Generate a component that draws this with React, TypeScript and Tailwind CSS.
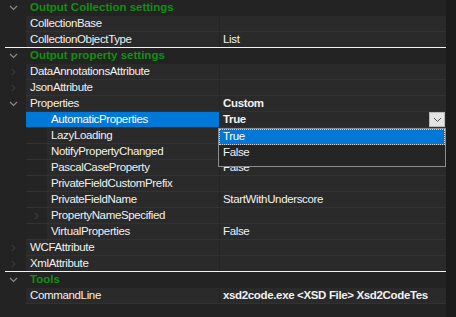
import React from "react";

type Row =
  | { kind: "cat"; label: string }
  | {
      kind: "prop";
      name: string;
      value?: string;
      bold?: boolean;
      nested?: boolean;
      chevron?: "open" | "closed";
      selected?: boolean;
      last?: boolean;
    };

const rows: Row[] = [
  { kind: "cat", label: "Output Collection settings" },
  { kind: "prop", name: "CollectionBase" },
  { kind: "prop", name: "CollectionObjectType", value: "List", last: true },
  { kind: "cat", label: "Output property settings" },
  { kind: "prop", name: "DataAnnotationsAttribute", chevron: "closed" },
  { kind: "prop", name: "JsonAttribute", chevron: "closed" },
  { kind: "prop", name: "Properties", value: "Custom", bold: true, chevron: "open" },
  { kind: "prop", name: "AutomaticProperties", value: "True", bold: true, nested: true, selected: true },
  { kind: "prop", name: "LazyLoading", nested: true },
  { kind: "prop", name: "NotifyPropertyChanged", nested: true },
  { kind: "prop", name: "PascalCaseProperty", value: "False", nested: true },
  { kind: "prop", name: "PrivateFieldCustomPrefix", nested: true },
  { kind: "prop", name: "PrivateFieldName", value: "StartWithUnderscore", nested: true },
  { kind: "prop", name: "PropertyNameSpecified", nested: true, chevron: "closed" },
  { kind: "prop", name: "VirtualProperties", value: "False", nested: true },
  { kind: "prop", name: "WCFAttribute", chevron: "closed" },
  { kind: "prop", name: "XmlAttribute", chevron: "closed", last: true },
  { kind: "cat", label: "Tools" },
  { kind: "prop", name: "CommandLine", value: "xsd2code.exe <XSD File> Xsd2CodeTes", bold: true },
];

function ChevronDown() {
  return (
    <svg width="9" height="6" viewBox="0 0 9 6" className="block">
      <path d="M1 1 L4.5 4.5 L8 1" fill="none" stroke="#8a8a8a" strokeWidth="1.2" />
    </svg>
  );
}

function ChevronRight() {
  return (
    <svg width="5" height="8" viewBox="0 0 5 8" className="block">
      <path d="M1 1 L4 4 L1 7" fill="none" stroke="#3a3a3a" strokeWidth="1.2" />
    </svg>
  );
}

function PropRow({ row }: { row: Extract<Row, { kind: "prop" }> }) {
  const border = row.last ? "border-b border-[#f2f2f2]" : "border-b border-[#323232]";
  return (
    <div className="flex h-4">
      {/* outer gutter */}
      <div className="flex w-[26px] shrink-0 items-center justify-center">
        {!row.nested && row.chevron === "open" && <ChevronDown />}
        {!row.nested && row.chevron === "closed" && <ChevronRight />}
      </div>
      <div className={`flex min-w-0 flex-1 ${border} ${row.last ? "-ml-[21px] pl-[21px]" : ""}`}>
        <div
          className={`flex w-[193px] shrink-0 items-center ${
            row.selected ? "bg-[#0078d7] text-white" : "bg-[#2a2a2b]"
          }`}
        >
          {row.nested && (
            <div
              className={`flex h-full w-[21px] shrink-0 items-center justify-center ${
                row.selected ? "" : "bg-[#242424]"
              }`}
            >
              {row.chevron === "closed" && <ChevronRight />}
            </div>
          )}
          <span className="whitespace-nowrap pl-[4px] leading-none">{row.name}</span>
        </div>
        <div className="w-px shrink-0 bg-[#232323]" />
        <div className="relative flex min-w-0 flex-1 items-center overflow-hidden bg-[#2a2a2b]">
          <span className={`whitespace-nowrap pl-[3px] leading-none ${row.bold ? "font-bold" : ""}`}>
            {row.value}
          </span>
          {row.selected && (
            <div className="absolute right-px top-0 flex h-[15px] w-4 items-center justify-center border border-[#b9b9b9] bg-[#e4e4e4]">
              <svg width="9" height="6" viewBox="0 0 9 6">
                <path d="M1 1 L4.5 4.5 L8 1" fill="none" stroke="#555" strokeWidth="1" />
              </svg>
            </div>
          )}
        </div>
      </div>
    </div>
  );
}

function CatRow({ label }: { label: string }) {
  return (
    <div className="flex h-4 items-center">
      <div className="flex w-[26px] shrink-0 items-center justify-center">
        <ChevronDown />
      </div>
      <span className="pl-[4px] font-bold leading-none tracking-[0px] text-[#119011]">{label}</span>
    </div>
  );
}

export default function App() {
  return (
    <div
      className="flex h-[317px] w-[456px] overflow-hidden bg-[#232323] text-[11.5px] tracking-[-0.35px] text-[#f1f1f1]"
      style={{ fontFamily: '"Liberation Sans", Arial, sans-serif' }}
    >
      <div className="relative w-[446px] shrink-0">
        {rows.map((row, i) =>
          row.kind === "cat" ? (
            <CatRow key={i} label={row.label} />
          ) : (
            <PropRow key={i} row={row} />
          )
        )}

        {/* open dropdown list */}
        <div className="absolute left-[218px] top-[128px] w-[228px] border border-[#8c8c8c] bg-[#252526]">
          <div className="flex h-4 items-center border border-dotted border-[#d0d0d0] bg-[#0078d7] pl-[3px] text-white">
            True
          </div>
          <div className="flex h-4 items-center pl-[4px]">False</div>
          <div className="h-[5px]" />
        </div>
      </div>
      <div className="flex-1 bg-[#1b1b1b]" />
    </div>
  );
}
